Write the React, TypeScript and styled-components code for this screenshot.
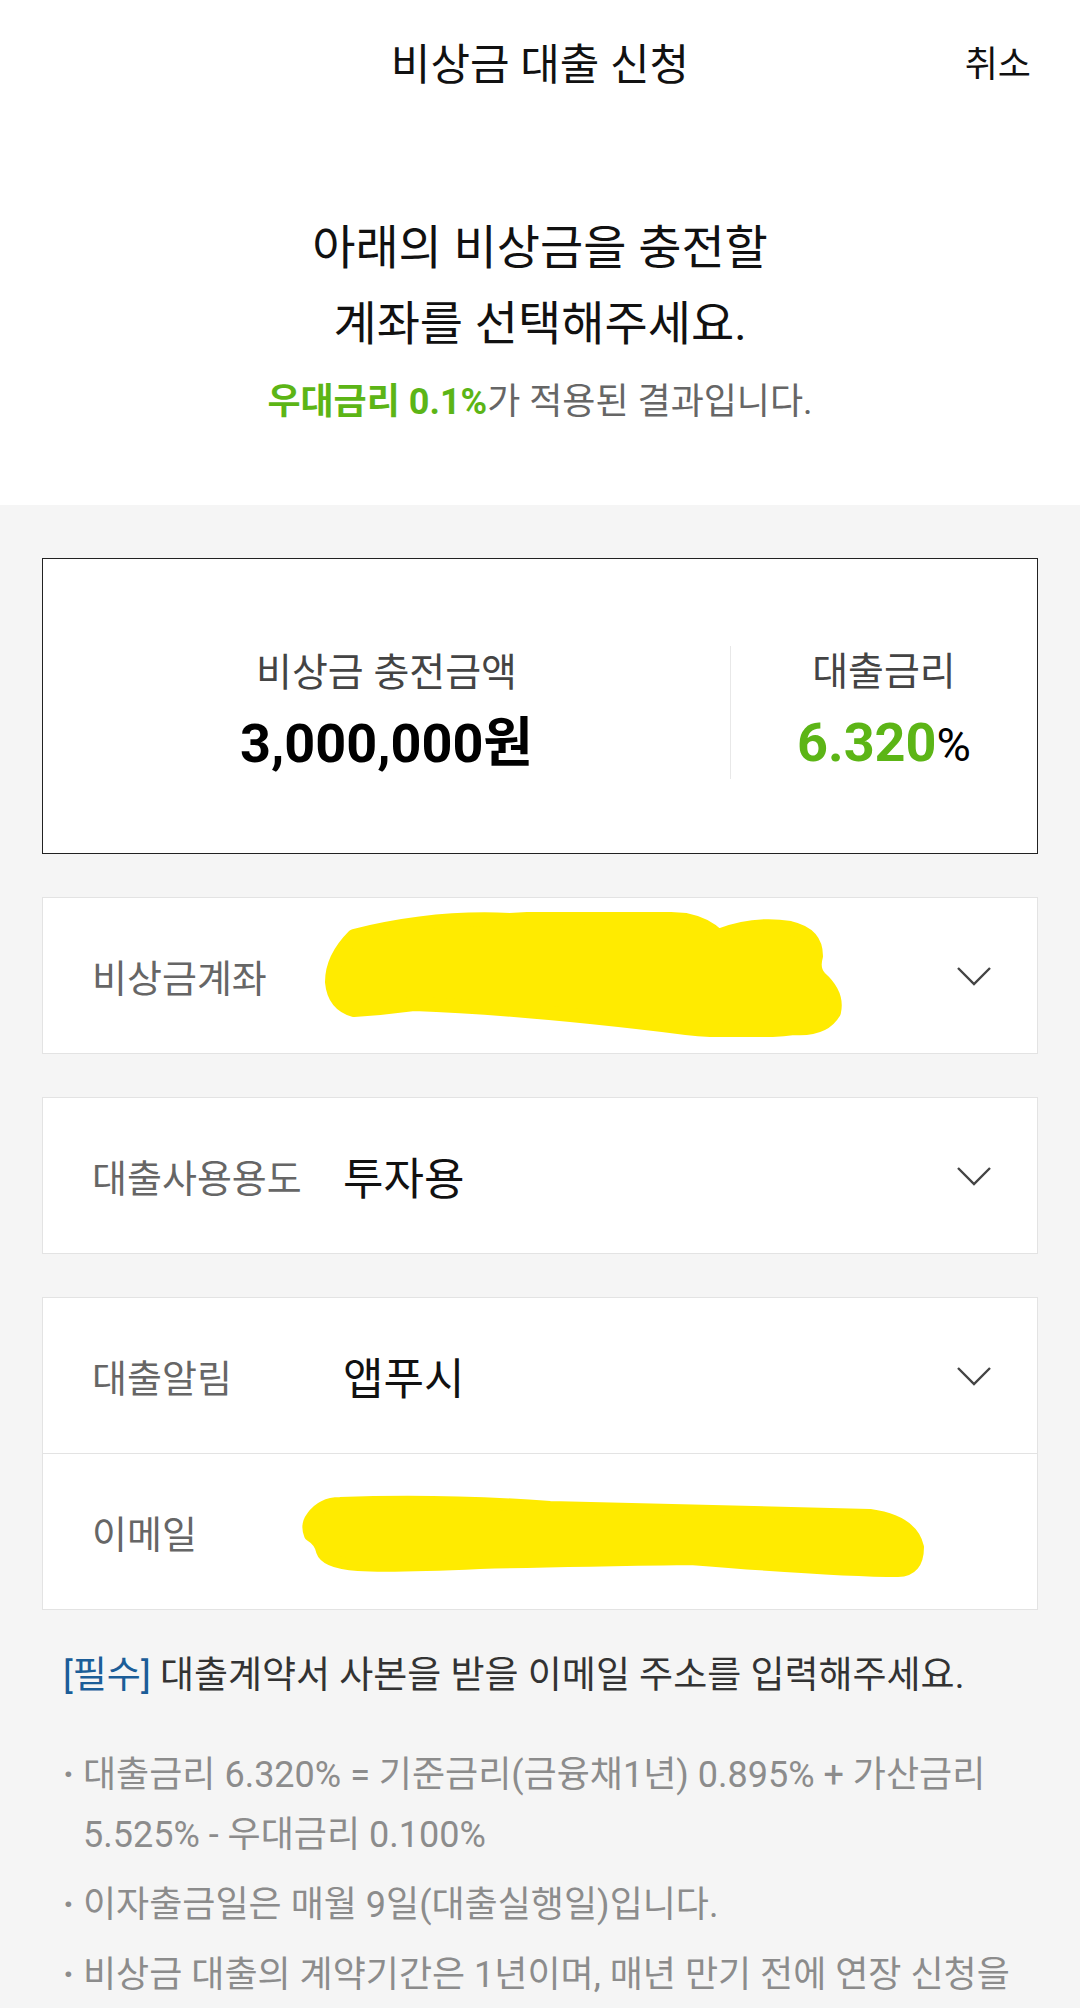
import React from 'react';
import styled, { createGlobalStyle } from 'styled-components';

const GlobalStyle = createGlobalStyle`
  html, body {
    margin: 0;
    padding: 0;
  }
  body {
    background: #f5f5f5;
    font-family: Roboto, "Noto Sans CJK KR", "Noto Sans", sans-serif;
    color: #111;
  }
  * {
    box-sizing: border-box;
  }
`;

const Page = styled.div`
  width: 1080px;
  min-height: 2008px;
  background: #f5f5f5;
  overflow: hidden;
`;

const Top = styled.div`
  background: #fff;
`;

const Header = styled.header`
  height: 122px;
  display: grid;
  grid-template-columns: 1fr auto 1fr;
  align-items: center;
  padding: 0 49px;
`;

const Title = styled.h1`
  grid-column: 2;
  margin: 0;
  font-size: 43px;
  font-weight: 400;
  color: #111;
`;

const Cancel = styled.button`
  justify-self: end;
  border: 0;
  background: none;
  padding: 0;
  font-family: inherit;
  font-size: 36px;
  color: #111;
`;

const Intro = styled.section`
  padding: 88px 0 79px;
  text-align: center;
`;

const Headline = styled.p`
  margin: 0;
  font-size: 47px;
  line-height: 76px;
  color: #111;
`;

const Sub = styled.p`
  margin: 16px 0 0;
  font-size: 36px;
  line-height: 48px;
  color: #666;
`;

const Green = styled.span`
  color: #5cb516;
  font-weight: 700;
`;

const Body = styled.main`
  padding: 53px 42px 0;
`;

// 충전금액 / 금리 요약 카드
const Summary = styled.div`
  height: 296px;
  border: 1px solid #222;
  background: #fff;
  display: flex;
  align-items: center;
  padding-top: 12px;
`;

const Stat = styled.div<{ $width?: number }>`
  flex: ${(p) => (p.$width ? `0 0 ${p.$width}px` : '1')};
  text-align: center;
`;

const StatLabel = styled.div`
  font-size: 39px;
  line-height: 48px;
  color: #444;
`;

const StatValue = styled.div<{ $accent?: boolean }>`
  margin-top: 16px;
  font-size: 54px;
  line-height: 62px;
  font-weight: 700;
  color: ${(p) => (p.$accent ? '#5cb516' : '#000')};
`;

const Percent = styled.span`
  font-size: 47px;
  font-weight: 400;
  color: #000;
`;

const VDivider = styled.div`
  width: 1px;
  height: 133px;
  background: #e8e8e8;
`;

const Panel = styled.div`
  margin-top: 43px;
  background: #fff;
  border: 1px solid #e3e3e3;
`;

const Field = styled.div`
  position: relative;
  height: 155px;
  display: flex;
  align-items: center;
  padding: 0 45px 0 49px;
  & + & {
    height: 156px;
    border-top: 1px solid #e3e3e3;
  }
`;

const FieldLabel = styled.span`
  width: 251px;
  flex: none;
  font-size: 38px;
  color: #666;
`;

const FieldValue = styled.span`
  flex: 1;
  font-size: 44px;
  color: #111;
`;

const Chevron = styled.svg`
  width: 36px;
  height: 20px;
  flex: none;
`;

const Scribble = styled.svg<{ $left: number; $top: number }>`
  position: absolute;
  left: ${(p) => p.$left}px;
  top: ${(p) => p.$top}px;
  pointer-events: none;
`;

const Note = styled.p`
  margin: 42px 0 0;
  padding-left: 21px;
  font-size: 37px;
  line-height: 48px;
  color: #333;
`;

const Required = styled.span`
  color: #1b5d98;
`;

const Notes = styled.ul`
  list-style: none;
  margin: 45px 0 0;
  padding: 0 0 0 21px;
  display: flex;
  flex-direction: column;
  gap: 10px;
`;

const NoteItem = styled.li`
  display: flex;
  font-size: 36px;
  line-height: 60px;
  color: #8c8c8c;
`;

const Dot = styled.span`
  width: 20px;
  flex: none;
  font-weight: 700;
`;

const ChevronDown = () => (
  <Chevron viewBox="0 0 36 20">
    <polyline points="2,2 18,18 34,2" fill="none" stroke="#444" strokeWidth="2.4" />
  </Chevron>
);

const YELLOW = '#ffeb00';

const notes = [
  '대출금리 6.320% = 기준금리(금융채1년) 0.895% + 가산금리 5.525% - 우대금리 0.100%',
  '이자출금일은 매월 9일(대출실행일)입니다.',
  '비상금 대출의 계약기간은 1년이며, 매년 만기 전에 연장 신청을 하셔야 하며, 연장 시 심사 결과에 따라 한도와 금리가 변경될 수 있습니다.',
];

const App: React.FC = () => {
  return (
    <Page>
      <GlobalStyle />
      <Top>
        <Header>
          <Title>비상금 대출 신청</Title>
          <Cancel>취소</Cancel>
        </Header>
        <Intro>
          <Headline>아래의 비상금을 충전할</Headline>
          <Headline>계좌를 선택해주세요.</Headline>
          <Sub>
            <Green>우대금리 0.1%</Green>가 적용된 결과입니다.
          </Sub>
        </Intro>
      </Top>

      <Body>
        <Summary>
          <Stat>
            <StatLabel>비상금 충전금액</StatLabel>
            <StatValue>3,000,000원</StatValue>
          </Stat>
          <VDivider />
          <Stat $width={306}>
            <StatLabel>대출금리</StatLabel>
            <StatValue $accent>
              6.320<Percent>%</Percent>
            </StatValue>
          </Stat>
        </Summary>

        <Panel>
          <Field>
            <FieldLabel>비상금계좌</FieldLabel>
            <FieldValue />
            <ChevronDown />
            <Scribble $left={281} $top={14} width="520" height="125" viewBox="0 0 520 125">
              <path
                d="M30 24 Q110 4 186 8 Q280 2 362 8 Q382 12 394 24 Q430 10 466 16 Q492 22 492 44 Q488 58 496 66 Q514 82 510 100 Q500 118 470 116 Q420 122 362 116 Q200 96 90 92 Q60 96 30 98 Q10 92 8 70 Q8 46 30 24 Z"
                fill={YELLOW}
                stroke={YELLOW}
                strokeWidth="14"
                strokeLinejoin="round"
              />
            </Scribble>
          </Field>
        </Panel>

        <Panel>
          <Field>
            <FieldLabel>대출사용용도</FieldLabel>
            <FieldValue>투자용</FieldValue>
            <ChevronDown />
          </Field>
        </Panel>

        <Panel>
          <Field>
            <FieldLabel>대출알림</FieldLabel>
            <FieldValue>앱푸시</FieldValue>
            <ChevronDown />
          </Field>
          <Field>
            <FieldLabel>이메일</FieldLabel>
            <FieldValue />
            <Scribble $left={257} $top={41} width="630" height="84" viewBox="0 0 630 84">
              <path
                d="M12 22 Q22 8 40 8 Q140 4 250 12 Q420 16 570 20 Q612 26 618 52 Q618 76 598 76 Q540 76 390 64 Q260 66 180 68 Q90 72 58 70 Q26 68 22 56 Q20 46 10 40 Q6 30 12 22 Z"
                fill={YELLOW}
                stroke={YELLOW}
                strokeWidth="12"
                strokeLinejoin="round"
              />
            </Scribble>
          </Field>
        </Panel>

        <Note>
          <Required>[필수]</Required> 대출계약서 사본을 받을 이메일 주소를 입력해주세요.
        </Note>

        <Notes>
          {notes.map((text) => (
            <NoteItem key={text}>
              <Dot>·</Dot>
              <span>{text}</span>
            </NoteItem>
          ))}
        </Notes>
      </Body>
    </Page>
  );
};

export default App;
